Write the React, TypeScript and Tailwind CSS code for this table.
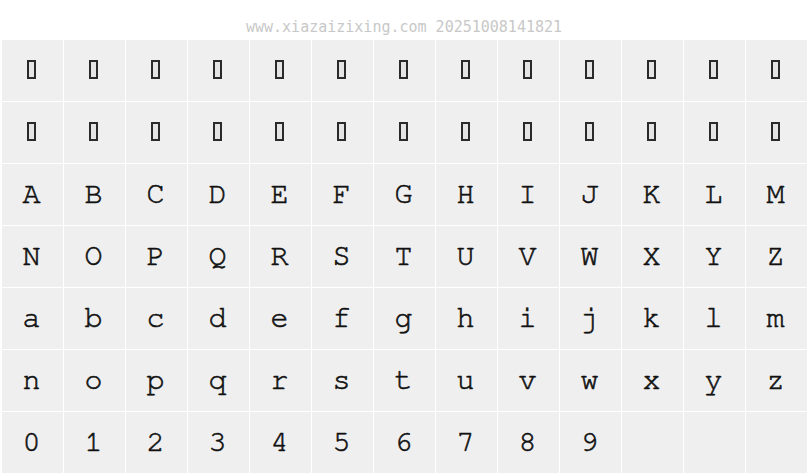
import React from "react";

const upper1 = "ABCDEFGHIJKLM".split("");
const upper2 = "NOPQRSTUVWXYZ".split("");
const lower1 = "abcdefghijklm".split("");
const lower2 = "nopqrstuvwxyz".split("");
const digits = "0123456789".split("");

function Tofu() {
  return <div className="w-[9px] h-[19px] border-2 border-[#2a2a2a] bg-[#e4e4e4] -translate-x-[1px] -translate-y-[1px]" />;
}

function Cell({ ch, tofu }: { ch?: string; tofu?: boolean }) {
  return (
    <div className="w-[61px] h-[61px] bg-[#efefef] flex items-center justify-center">
      {tofu ? (
        <Tofu />
      ) : ch ? (
        <span
          className="text-[30px] leading-none text-[#111] -translate-x-[1px] -translate-y-[1px] [-webkit-text-stroke:0.6px_#111]"
          style={{ fontFamily: '"Nimbus Mono PS", "Nimbus Mono L", "FreeMono", "Courier 10 Pitch", "Liberation Mono", monospace' }}
        >
          {ch}
        </span>
      ) : null}
    </div>
  );
}

export default function App() {
  const cells: React.ReactNode[] = [];
  for (let i = 0; i < 26; i++) cells.push(<Cell key={"t" + i} tofu />);
  [...upper1, ...upper2, ...lower1, ...lower2, ...digits].forEach((c, i) =>
    cells.push(<Cell key={"c" + i} ch={c} />)
  );
  for (let i = 0; i < 3; i++) cells.push(<Cell key={"e" + i} />);

  return (
    <div className="w-[808px] h-[476px] bg-white overflow-hidden">
      <div
        className="h-[40px] pt-[19px] text-center text-[15px] leading-[16px] text-[#c8c8c8]"
        style={{ fontFamily: '"DejaVu Sans Mono", monospace' }}
      >
        www.xiazaizixing.com 20251008141821
      </div>
      <div className="pl-[2px] grid grid-cols-[repeat(13,61px)] auto-rows-[61px] gap-[1px]">
        {cells}
      </div>
    </div>
  );
}
